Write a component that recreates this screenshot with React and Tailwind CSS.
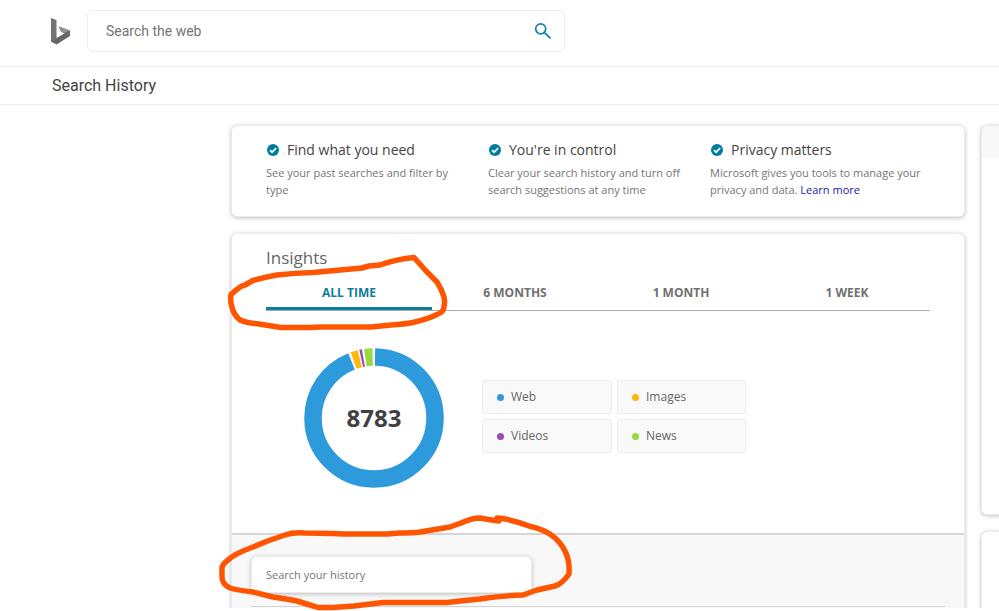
const features = [
  {
    title: 'Find what you need',
    text: 'See your past searches and filter by type',
  },
  {
    title: "You're in control",
    text: 'Clear your search history and turn off search suggestions at any time',
  },
  {
    title: 'Privacy matters',
    text: 'Microsoft gives you tools to manage your privacy and data.',
    link: 'Learn more',
  },
];

const tabs = ['ALL TIME', '6 MONTHS', '1 MONTH', '1 WEEK'];

// start and end are degrees, clockwise from twelve o'clock
const slices = [
  { name: 'Web', color: '#2d9bdb', start: 1, end: 338.4 },
  { name: 'Images', color: '#ffb70a', start: 340.4, end: 346.4 },
  { name: 'Videos', color: '#9b4dad', start: 347.8, end: 350 },
  { name: 'News', color: '#98d841', start: 351.8, end: 358.7 },
];

const card = 'rounded-md border border-[#ebebeb] bg-white shadow-[0_1px_4px_rgba(0,0,0,0.25)]';

function BingLogo() {
  return (
    <svg viewBox="0 0 20 27" className="h-[27px] w-5" role="img" aria-label="Bing">
      <path d="M0 0 5.5 2v18.5L0 24z" fill="#737373" />
      <path d="M0 23.500 5.500 20 12.500 16 19 12.200V18L5.500 26.500z" fill="#666" />
      <path d="M7.500 8.500 19 12.500V18l-3-1.500-3.500-1.700-2.500-1z" fill="#6c6c6c" />
      <path d="M7.500 8.500 19 12.500l-6.200 2.600-2.700-1.300z" fill="#929292" />
    </svg>
  );
}

function SearchIcon() {
  return (
    <svg viewBox="0 0 18 18" className="size-[18px]" fill="none" stroke="#0a84b0" aria-hidden="true">
      <circle cx="6.7" cy="6.8" r="5" strokeWidth="1.7" />
      <path d="m10.3 10.4 6.2 6" strokeWidth="1.9" />
    </svg>
  );
}

function CheckIcon() {
  return (
    <svg viewBox="0 0 12 12" className="size-3 shrink-0" aria-hidden="true">
      <circle cx="6" cy="6" r="6" fill="#007c9e" />
      <path d="m3 6.1 2.1 2.1L9.2 4" fill="none" stroke="#fff" strokeWidth="1.7" />
    </svg>
  );
}

function Donut() {
  return (
    <div className="grid size-[140px] place-items-center">
      <svg viewBox="0 0 140 140" className="size-[140px] [grid-area:1/1]" aria-hidden="true">
        <g fill="none" strokeWidth="17.5" transform="rotate(-90 70 70)">
          {slices.map((s) => (
            <circle
              key={s.name}
              cx="70"
              cy="70"
              r="61"
              pathLength="360"
              stroke={s.color}
              strokeDasharray={`${s.end - s.start} 360`}
              strokeDashoffset={-s.start}
            />
          ))}
        </g>
      </svg>
      <span className="text-2xl font-bold text-[#404040] [grid-area:1/1]">8783</span>
    </div>
  );
}

function Annotations() {
  return (
    <svg
      className="pointer-events-none absolute top-0 left-0 h-[611px] w-[600px]"
      viewBox="0 0 600 611"
      fill="none"
      stroke="#ff5500"
      strokeWidth="5.5"
      strokeLinejoin="round"
      strokeLinecap="round"
      aria-hidden="true"
    >
      <path d="M414 257.500Q397 259 380 265L369 266 362 268 313 272.500Q294 273 277 275 265 277 253 280.500L245 285Q240 286 231 294.500Q230 302 232 307Q233 314 240 320 246 323 259 324L281 327.500H310L320 327H371L391 325Q405 324 413 322.500 428 319 437 314.500 444 312 444 306.500 445 302 444 297 442 290 437 282L427 272Z" />
      <path d="M499 521Q490 520 480 518 472 518 461 523L450 527 432 530 420 532Q412 533 400 533L387 534H343L333 533.500 305 533Q293 532 285 535 269 540 253 547 234 554 228 560 221 565 222 570V577Q222 584 230 588 236 590 253 592L273 597Q287 599 297 601L310 605 318 607.500H333L354 606 383 602.500H447L460 601 480 599Q498 596 523 595L537 590 555 586Q562 584 569 574 570 561 565 551 560 541 550 534 542 529 529 526 516 521 503 518.500L497 518V520" />
    </svg>
  );
}

export default function App() {
  return (
    <div className="relative min-h-[611px] overflow-hidden bg-white font-['Open_Sans','Noto_Sans',sans-serif] text-[#666]">
      <header className="font-[Roboto,sans-serif]">
        <div className="flex h-[67px] items-start border-b border-[#efefef] pt-[10px] pl-[51px]">
          <a href="#" className="mt-2">
            <BingLogo />
          </a>
          <form className="ml-4 flex h-[42px] w-[478px] items-center rounded-md border border-[#ededed] pr-3 pl-[18px]">
            <input
              type="search"
              aria-label="Search the web"
              placeholder="Search the web"
              className="min-w-0 flex-1 text-sm outline-none placeholder:text-[#767676]"
            />
            <button type="button" aria-label="Search">
              <SearchIcon />
            </button>
          </form>
        </div>
        <h1 className="flex h-[38px] items-center border-b border-[#efefef] pl-[52px] text-base text-[#444]">
          Search History
        </h1>
      </header>

      <div className="flex h-[503px] gap-4 overflow-hidden pt-5 pl-[231px]">
        <main className="flex w-full max-w-[734px] shrink-0 flex-col gap-4">
          <section className={`${card} flex h-[92px] shrink-0 pt-4 pl-[34px]`}>
            {features.map((f) => (
              <div key={f.title} className="w-[222px] pr-5 last:pr-0">
                <h2 className="flex items-center gap-2 pl-px text-sm leading-4 text-[#444]">
                  <CheckIcon />
                  {f.title}
                </h2>
                <p className="mt-[6px] text-[11px] leading-[17px] text-[#767676]">
                  {f.text}{' '}
                  {f.link && (
                    <a href="#" className="text-[#1a1aa6]">
                      {f.link}
                    </a>
                  )}
                </p>
              </div>
            ))}
          </section>

          <section className={`${card} shrink-0 overflow-hidden`}>
            <div className="h-[301px] border-b-2 border-[#d6d6d6] px-[34px] pt-3">
              <h2 className="text-[17px] leading-6 text-[#666]">Insights</h2>
              <div role="tablist" className="mt-1 grid grid-cols-4 border-b border-[#aaa]">
                {tabs.map((t, i) => (
                  <button
                    key={t}
                    type="button"
                    role="tab"
                    aria-selected={i === 0}
                    className="h-9 border-b-3 border-transparent pt-1 text-xs font-bold text-[#707070] aria-selected:border-[#0f7c9c] aria-selected:text-[#0f7c9c]"
                  >
                    {t}
                  </button>
                ))}
              </div>
              <div className="mt-[37px] flex items-center gap-[38px] pl-[38px]">
                <Donut />
                <ul className="mb-1 grid grid-cols-[130px_129px] gap-[5px]">
                  {slices.map((s) => (
                    <li
                      key={s.name}
                      className="flex h-[34px] items-center gap-[7px] rounded-xs border border-[#eee] bg-[#f9f9f9] pl-[14px] text-xs"
                    >
                      <span className="mt-px size-[7px] rounded-full" style={{ backgroundColor: s.color }} />
                      {s.name}
                    </li>
                  ))}
                </ul>
              </div>
            </div>
            <div className="h-[90px] bg-[#f8f8f8] px-[19px] pt-[21px]">
              <div className="h-[51px] border-b border-[#d4d4d4]">
                <input
                  type="search"
                  aria-label="Search your history"
                  placeholder="Search your history"
                  className="h-[37px] w-[281px] rounded-md border border-[#ececec] bg-white px-[14px] text-[11px] shadow-[0_1px_4px_rgba(0,0,0,0.25)] outline-none placeholder:text-[#767676]"
                />
              </div>
            </div>
          </section>
        </main>

        <aside className="flex w-[300px] shrink-0 flex-col gap-4">
          <div className={`${card} h-[390px] shrink-0 overflow-hidden`}>
            <div className="h-8 bg-[#f8f8f8]" />
          </div>
          <div className={`${card} h-[120px] shrink-0`} />
        </aside>
      </div>

      <Annotations />
    </div>
  );
}
